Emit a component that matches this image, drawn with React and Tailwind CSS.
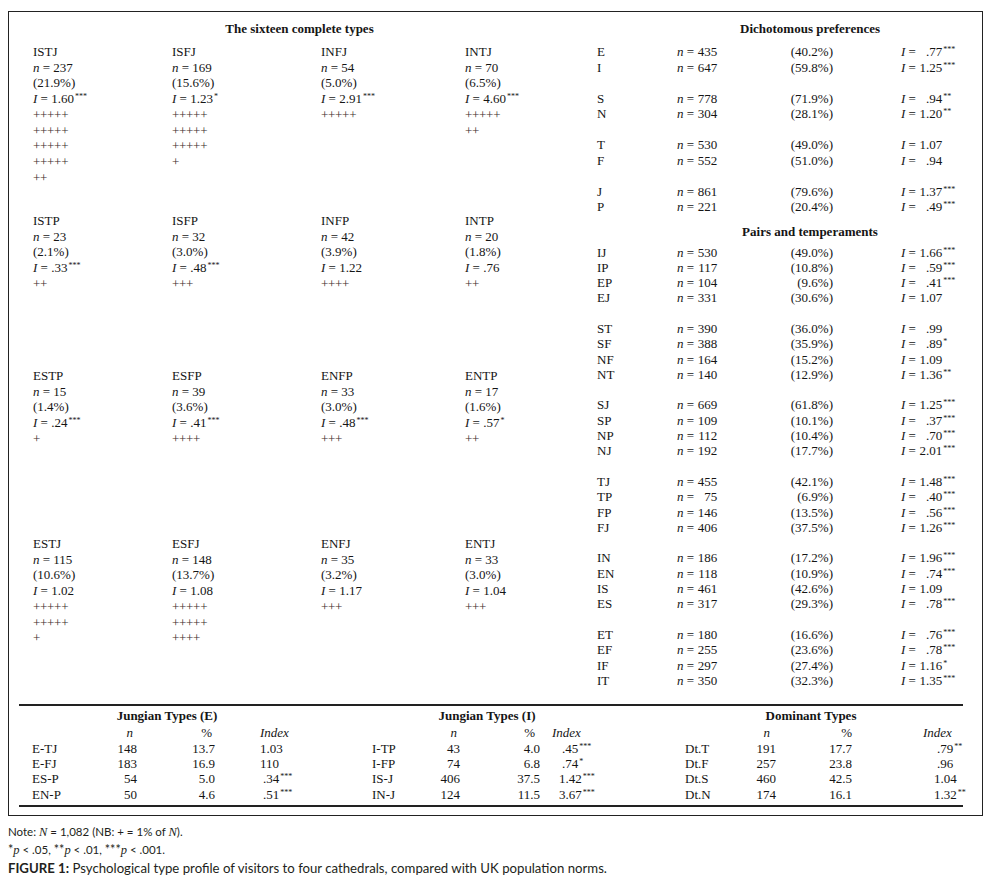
const serif = "font-['Liberation_Serif',serif]";

const types = [
	[
		["ISTJ", "237", "21.9%", "1.60", "***", [5, 5, 5, 5, 2]],
		["ISFJ", "169", "15.6%", "1.23", "*", [5, 5, 5, 1]],
		["INFJ", "54", "5.0%", "2.91", "***", [5]],
		["INTJ", "70", "6.5%", "4.60", "***", [5, 2]],
	],
	[
		["ISTP", "23", "2.1%", ".33", "***", [2]],
		["ISFP", "32", "3.0%", ".48", "***", [3]],
		["INFP", "42", "3.9%", "1.22", "", [4]],
		["INTP", "20", "1.8%", ".76", "", [2]],
	],
	[
		["ESTP", "15", "1.4%", ".24", "***", [1]],
		["ESFP", "39", "3.6%", ".41", "***", [4]],
		["ENFP", "33", "3.0%", ".48", "***", [3]],
		["ENTP", "17", "1.6%", ".57", "*", [2]],
	],
	[
		["ESTJ", "115", "10.6%", "1.02", "", [5, 5, 1]],
		["ESFJ", "148", "13.7%", "1.08", "", [5, 5, 4]],
		["ENFJ", "35", "3.2%", "1.17", "", [3]],
		["ENTJ", "33", "3.0%", "1.04", "", [3]],
	],
];
const rowHeights = ["h-[169px]", "h-[155px]", "h-[168px]", "h-auto"];
const colWidths = ["w-[139px]", "w-[149px]", "w-[144px]", "w-[110px]"];

const dichot = [
	[["E", "435", "40.2%", ".77", "***"], ["I", "647", "59.8%", "1.25", "***"]],
	[["S", "778", "71.9%", ".94", "**"], ["N", "304", "28.1%", "1.20", "**"]],
	[["T", "530", "49.0%", "1.07", ""], ["F", "552", "51.0%", ".94", ""]],
	[["J", "861", "79.6%", "1.37", "***"], ["P", "221", "20.4%", ".49", "***"]],
];

const pairs = [
	[
		["IJ", "530", "49.0%", "1.66", "***"],
		["IP", "117", "10.8%", ".59", "***"],
		["EP", "104", "9.6%", ".41", "***"],
		["EJ", "331", "30.6%", "1.07", ""],
	],
	[
		["ST", "390", "36.0%", ".99", ""],
		["SF", "388", "35.9%", ".89", "*"],
		["NF", "164", "15.2%", "1.09", ""],
		["NT", "140", "12.9%", "1.36", "**"],
	],
	[
		["SJ", "669", "61.8%", "1.25", "***"],
		["SP", "109", "10.1%", ".37", "***"],
		["NP", "112", "10.4%", ".70", "***"],
		["NJ", "192", "17.7%", "2.01", "***"],
	],
	[
		["TJ", "455", "42.1%", "1.48", "***"],
		["TP", "75", "6.9%", ".40", "***"],
		["FP", "146", "13.5%", ".56", "***"],
		["FJ", "406", "37.5%", "1.26", "***"],
	],
	[
		["IN", "186", "17.2%", "1.96", "***"],
		["EN", "118", "10.9%", ".74", "***"],
		["IS", "461", "42.6%", "1.09", ""],
		["ES", "317", "29.3%", ".78", "***"],
	],
	[
		["ET", "180", "16.6%", ".76", "***"],
		["EF", "255", "23.6%", ".78", "***"],
		["IF", "297", "27.4%", "1.16", "*"],
		["IT", "350", "32.3%", "1.35", "***"],
	],
];

const bottomRows = [
	[["E-TJ", "148", "13.7", "1.03", ""], ["I-TP", "43", "4.0", ".45", "***"], ["Dt.T", "191", "17.7", ".79", "**"]],
	[["E-FJ", "183", "16.9", "110", ""], ["I-FP", "74", "6.8", ".74", "*"], ["Dt.F", "257", "23.8", ".96", ""]],
	[["ES-P", "54", "5.0", ".34", "***"], ["IS-J", "406", "37.5", "1.42", "***"], ["Dt.S", "460", "42.5", "1.04", ""]],
	[["EN-P", "50", "4.6", ".51", "***"], ["IN-J", "124", "11.5", "3.67", "***"], ["Dt.N", "174", "16.1", "1.32", "**"]],
];

function Sup({ s }) {
	if (!s) return null;
	return <sup className="text-[8px] ml-[1px]">{s}</sup>;
}

function TypeCell({ t }) {
	const [name, n, pct, idx, sig, plus] = t;
	return (
		<div className="leading-[15.7px]">
			<div>{name}</div>
			<div>
				<i>n</i> = {n}
			</div>
			<div>({pct})</div>
			<div>
				<i>I</i> = {idx}
				<Sup s={sig} />
			</div>
			{plus.map((p, i) => (
				<div key={i} className="text-[#3d2b2b] tracking-[-0.3px]">
					{"+".repeat(p)}
				</div>
			))}
		</div>
	);
}

function PrefRow({ r, lh }) {
	const [label, n, pct, idx, sig] = r;
	return (
		<div className={`flex ${lh}`}>
			<div className="w-[80px]">{label}</div>
			<div className="w-[113px]">
				<i>n</i> ={" "}
				<span className="inline-block w-[20px] text-right">{n}</span>
			</div>
			<div className="w-[111px]">
				<span className="inline-block w-[43px] text-right">({pct})</span>
			</div>
			<div>
				<i>I</i> ={" "}
				<span className="inline-block w-[23px] text-right">{idx}</span>
				<Sup s={sig} />
			</div>
		</div>
	);
}

function BottomCells({ r, widths }) {
	const [label, n, pct, idx, sig] = r;
	return (
		<>
			<div className={widths[0]}>{label}</div>
			<div className={`${widths[1]} text-right`}>{n}</div>
			<div className={`${widths[2]} text-right`}>{pct}</div>
			<div className={widths[3]}>
				<span className={idx.startsWith(".") ? "pl-[3px]" : ""}>{idx}</span>
				<Sup s={sig} />
			</div>
		</>
	);
}

const wE = ["w-[81px] pl-[13px]", "w-[37px]", "w-[78px]", "w-[157px] pl-[45px]"];
const wI = ["w-[48px]", "w-[40px]", "w-[80px]", "w-[145px] pl-[19px]"];
const wD = ["w-[55px]", "w-[36px]", "w-[76px]", "w-[111px] pl-[82px]"];

export default function App() {
	return (
		<div className="w-[995px] min-h-[885px] bg-white text-[#151515]">
			<div className={`ml-2 mt-[11px] w-[975px] border border-[#222] ${serif} text-[13px]`}>
				<div className="flex pt-[9px]">
					{/* sixteen types */}
					<div className="w-[571px]">
						<div className="pl-[10px] text-center font-bold leading-[16px]">
							The sixteen complete types
						</div>
						<div className="mt-[7px] pl-[24px]">
							{types.map((row, ri) => (
								<div key={ri} className={`flex ${rowHeights[ri]}`}>
									{row.map((t, ci) => (
										<div key={ci} className={colWidths[ci]}>
											<TypeCell t={t} />
										</div>
									))}
								</div>
							))}
						</div>
					</div>

					{/* preferences */}
					<div className="w-[402px] pl-[17px]">
						<div className="pl-[41px] text-center font-bold leading-[16px]">
							Dichotomous preferences
						</div>
						<div className="mt-[7px] flex flex-col gap-[15.5px]">
							{dichot.map((g, gi) => (
								<div key={gi}>
									{g.map((r) => (
										<PrefRow key={r[0]} r={r} lh="leading-[15.5px]" />
									))}
								</div>
							))}
						</div>
						<div className="mt-[9px] pl-[41px] text-center font-bold leading-[16px]">
							Pairs and temperaments
						</div>
						<div className="mt-[5px] flex flex-col gap-[15.3px]">
							{pairs.map((g, gi) => (
								<div key={gi}>
									{g.map((r) => (
										<PrefRow key={r[0]} r={r} lh="leading-[15.3px]" />
									))}
								</div>
							))}
						</div>
					</div>
				</div>

				{/* bottom table */}
				<div className="ml-[10px] mt-[16px] mb-[8px] w-[944px] border-y-2 border-[#222] pt-[2px] pb-[3px] leading-[15.3px]">
					<div className="flex font-bold">
						<div className="w-[296px] text-center">Jungian Types (E)</div>
						<div className="w-[344px] text-center">Jungian Types (I)</div>
						<div className="w-[304px] text-center">Dominant Types</div>
					</div>
					<div className="mt-[2px] flex italic">
						<div className="w-[81px]" />
						<div className="w-[37px] pr-[4px] text-right">n</div>
						<div className="w-[78px] pr-[3px] text-right not-italic">%</div>
						<div className="w-[157px] pl-[45px]">Index</div>
						<div className="w-[48px]" />
						<div className="w-[40px] pr-[3px] text-right">n</div>
						<div className="w-[80px] pr-[5px] text-right not-italic">%</div>
						<div className="w-[145px] pl-[12px]">Index</div>
						<div className="w-[55px]" />
						<div className="w-[36px] pr-[6px] text-right">n</div>
						<div className="w-[76px] text-right not-italic">%</div>
						<div className="w-[111px] pl-[71px]">Index</div>
					</div>
					{bottomRows.map((row, i) => (
						<div key={i} className="flex">
							<BottomCells r={row[0]} widths={wE} />
							<BottomCells r={row[1]} widths={wI} />
							<BottomCells r={row[2]} widths={wD} />
						</div>
					))}
				</div>
			</div>

			<div className="ml-2 mt-[7px] font-['Lato',sans-serif] leading-[18px] text-[#231f20]">
				<div className="text-[11.5px]">
					Note: <i className={`${serif} text-[12.5px]`}>N</i> = 1,082 (NB: + = 1% of{" "}
					<i className={`${serif} text-[12.5px]`}>N</i>).
				</div>
				<div className="text-[11.5px]">
					<span className="text-[12.5px]">*</span>
					<i className={`${serif} text-[12.5px]`}>p</i> &lt; .05,{" "}
					<span className="text-[12.5px]">**</span>
					<i className={`${serif} text-[12.5px]`}>p</i> &lt; .01,{" "}
					<span className="text-[12.5px]">***</span>
					<i className={`${serif} text-[12.5px]`}>p</i> &lt; .001.
				</div>
				<div className="text-[13.2px]">
					<b>FIGURE 1:</b> Psychological type profile of visitors to four cathedrals, compared with UK
					population norms.
				</div>
			</div>
		</div>
	);
}
